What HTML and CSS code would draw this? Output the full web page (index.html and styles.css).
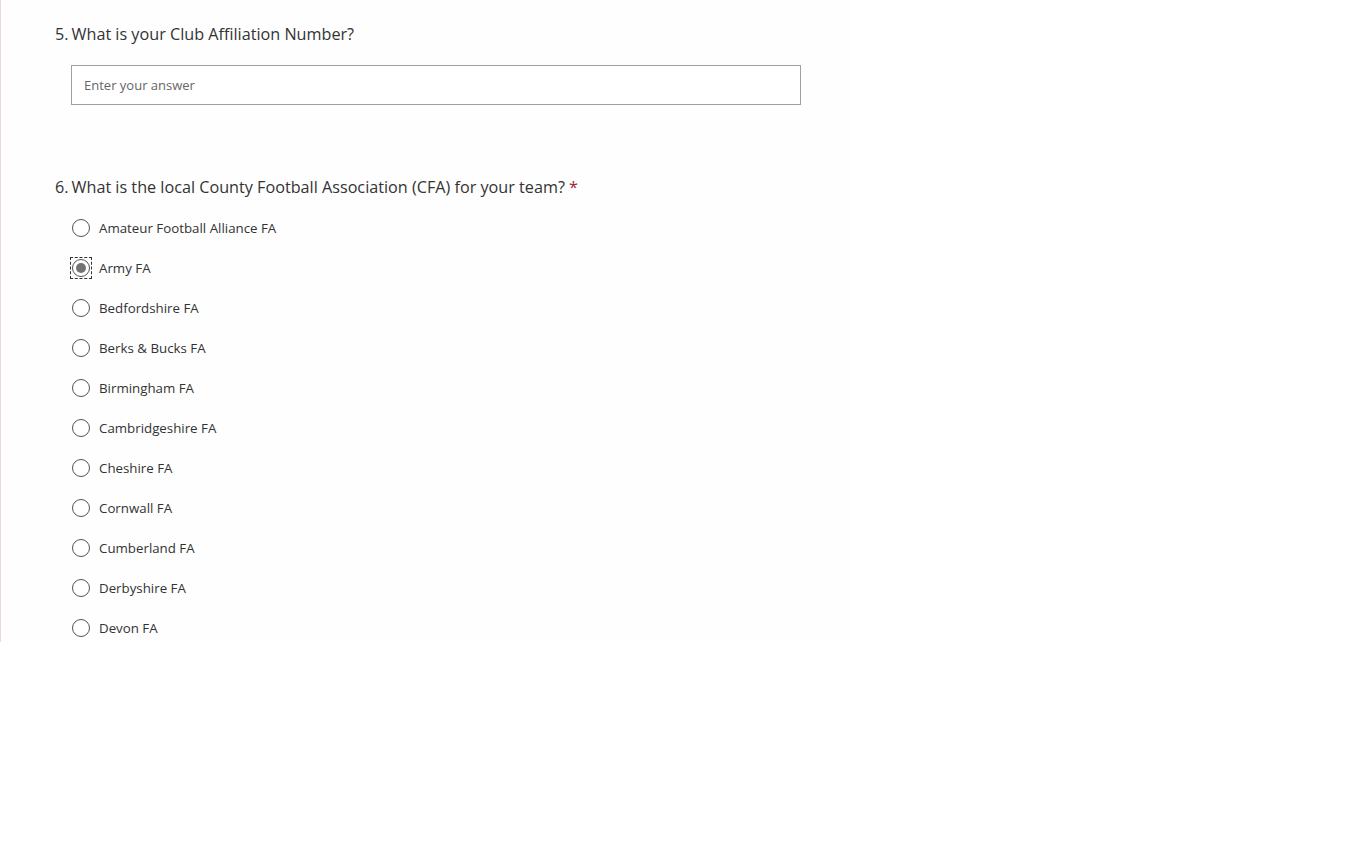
FILE: index.html
```html
<!DOCTYPE html>
<html lang="en">
<head>
    <meta charset="UTF-8">
    <title>Form</title>
    <link rel="stylesheet" href="styles.css">
</head>
<body>
    <div class="page">
        <div class="question q5">
            <div class="title"><span class="num">5.</span>What is your Club Affiliation Number?</div>
            <div class="answer">
                <input type="text" class="textbox" placeholder="Enter your answer">
            </div>
        </div>

        <div class="question q6">
            <div class="title"><span class="num">6.</span>What is the local County Football Association (CFA) for your team? <span class="req">*</span></div>
            <div class="choices">
                <label class="choice"><span class="radio"></span>Amateur Football Alliance FA</label>
                <label class="choice"><span class="radio checked focus"></span>Army FA</label>
                <label class="choice"><span class="radio"></span>Bedfordshire FA</label>
                <label class="choice"><span class="radio"></span>Berks &amp; Bucks FA</label>
                <label class="choice"><span class="radio"></span>Birmingham FA</label>
                <label class="choice"><span class="radio"></span>Cambridgeshire FA</label>
                <label class="choice"><span class="radio"></span>Cheshire FA</label>
                <label class="choice"><span class="radio"></span>Cornwall FA</label>
                <label class="choice"><span class="radio"></span>Cumberland FA</label>
                <label class="choice"><span class="radio"></span>Derbyshire FA</label>
                <label class="choice"><span class="radio"></span>Devon FA</label>
            </div>
        </div>
    </div>
</body>
</html>
```

FILE: styles.css
```css
body {
    margin: 0;
    padding: 0;
    background: #fff;
    font-family: "Open Sans", "Noto Sans", sans-serif;
    color: #333;
}

.page {
    width: 850px;
    height: 642px;
    overflow: hidden;
    background: #fefefe;
    border-left: 1px solid #ead9de;
    box-sizing: border-box;
}

.question {
    padding-left: 54px;
}

.title {
    font-size: 16.2px;
    line-height: 24px;
    color: #333;
}
.num {
    margin-right: 3px;
}
.req {
    color: #a4262c;
}

.q5 {
    padding-top: 22px;
}
.q5 .answer {
    padding: 19px 0 0 16px;
}
.textbox {
    display: block;
    width: 730px;
    height: 40px;
    box-sizing: border-box;
    border: 1px solid #a0a0a0;
    padding: 0 12px;
    font-family: inherit;
    font-size: 13px;
    color: #333;
    background: #fff;
    outline: none;
}
.textbox::placeholder {
    color: #666;
}

.q6 {
    padding-top: 70px;
}
.choices {
    padding: 9px 0 0 17px;
}
.choice {
    display: flex;
    align-items: center;
    height: 40px;
    font-size: 13.3px;
    color: #333;
}
.radio {
    position: relative;
    width: 18px;
    height: 18px;
    box-sizing: border-box;
    border: 1px solid #555;
    border-radius: 50%;
    background: #fff;
    margin-right: 9px;
    flex: none;
}
.radio.checked::after {
    content: "";
    position: absolute;
    left: 3px;
    top: 3px;
    width: 10px;
    height: 10px;
    border-radius: 50%;
    background: #737373;
}
.radio.focus::before {
    content: "";
    position: absolute;
    left: -3px;
    top: -3px;
    right: -3px;
    bottom: -3px;
    border: 1px dashed #333;
}
```
